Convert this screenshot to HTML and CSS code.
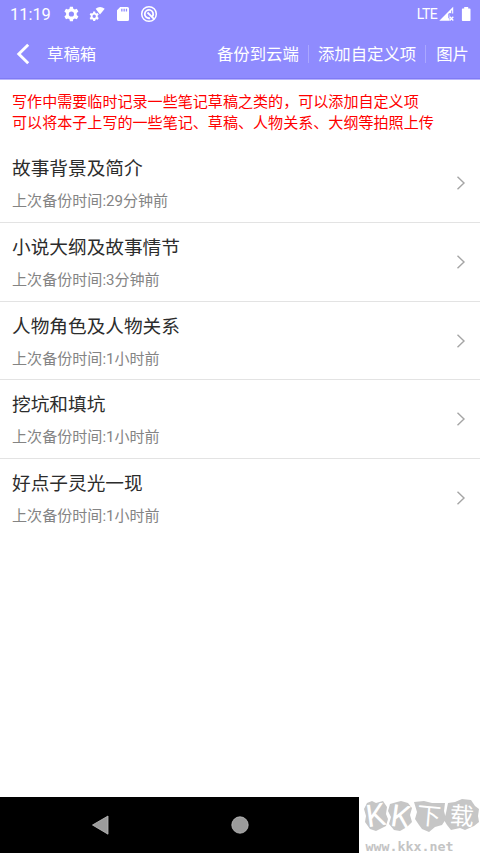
FILE: index.html
```html
<!DOCTYPE html>
<html lang="zh-CN">
<head>
<meta charset="utf-8">
<title>草稿箱</title>
<link rel="stylesheet" href="styles.css">
</head>
<body>
<div class="screen">
  <header class="top">
    <div class="status">
      <span class="clock">11:19</span>
      <svg class="status-icons" width="96" height="20" viewBox="0 0 96 20" fill="#fff">
        <g transform="translate(9.4 10)">
          <g id="gear">
            <path fill-rule="evenodd" d="M-1.5-7.3h3l.4 2.1 1.5.8 2-.8 1.6 2.7L5.3-1.1v2.2L7 2.5 5.4 5.2l-2-.8-1.5.8-.4 2.1h-3l-.4-2.1-1.5-.8-2 .8L-7 2.5l1.7-1.4v-2.200L-7-2.500l1.600-2.700 2 .8 1.500-.8zM0-2.600a2.600 2.600 0 1 0 0 5.200 2.600 2.600 0 0 0 0-5.200z"/>
          </g>
        </g>
        <use href="#gear" transform="translate(32.2 12.300) scale(.65)"/>
        <path d="M33.600 4.800Q38 1 42.700 4.800L38 10.600z"/>
        <path fill-rule="evenodd" d="M58.200 3h7.300q1.500 0 1.500 1.500v11q0 1.500-1.500 1.500h-9q-1.500 0-1.500-1.500V6.300zM59.200 4.800v2.600h1.300V4.800zm2.300 0v2.600h1.300V4.800zm2.300 0v2.600h1.300V4.800z"/>
        <g fill="none" stroke="#fff">
          <circle cx="87" cy="10" r="7.300" stroke-width="1.500"/>
          <path stroke-width="1.800" d="M90.500 12.300a4.200 4.200 0 1 0-2.500 1.800M85.500 8.500l6.700 6.700"/>
        </g>
      </svg>
      <span class="network">LTE</span>
      <svg class="signal" width="34" height="20" viewBox="0 0 34 20">
        <path d="M14.200 2.800V9.500h-3.700v7.200H.3z" fill="#fff"/>
        <path d="M12.700 6.500v3.300H9.800v4.400" stroke="#8f8bfe" stroke-width="1" fill="none"/>
        <path d="M10.700 12.700l3.600 3.800m0-3.800l-3.600 3.800" stroke="#fff" stroke-width="1.300"/>
        <path d="M25.200 3h4v1.500h1.500q.8 0 .8.800v11q0 .8-.8.800h-7q-.8 0-.8-.8v-11q0-.8.800-.8h1.500z" fill="#fff"/>
      </svg>
    </div>
    <div class="toolbar">
      <svg class="back" width="16" height="22" viewBox="0 0 16 22"><path d="M13.200 1.800L3.800 11l9.400 9.200" fill="none" stroke="#fff" stroke-width="2.900"/></svg>
      <h1 class="heading">草稿箱</h1>
      <nav class="actions">
        <span class="action"><span class="action-label">备份到云端</span></span>
        <span class="action"><span class="action-label">添加自定义项</span></span>
        <span class="action"><span class="action-label">图片</span></span>
      </nav>
    </div>
  </header>
  <main class="content">
    <p class="notice">写作中需要临时记录一些笔记草稿之类的，可以添加自定义项<br>可以将本子上写的一些笔记、草稿、人物关系、大纲等拍照上传</p>
    <ul class="list">
      <li class="row"><div><h2 class="title">故事背景及简介</h2><p class="time">上次备份时间:29分钟前</p></div><svg class="chevron" width="10" height="16" viewBox="0 0 10 16"><path d="M1.500 1.800L8 8l-6.500 6.200"/></svg></li>
      <li class="row"><div><h2 class="title">小说大纲及故事情节</h2><p class="time">上次备份时间:3分钟前</p></div><svg class="chevron" width="10" height="16" viewBox="0 0 10 16"><path d="M1.500 1.800L8 8l-6.500 6.200"/></svg></li>
      <li class="row"><div><h2 class="title">人物角色及人物关系</h2><p class="time">上次备份时间:1小时前</p></div><svg class="chevron" width="10" height="16" viewBox="0 0 10 16"><path d="M1.500 1.800L8 8l-6.500 6.200"/></svg></li>
      <li class="row"><div><h2 class="title">挖坑和填坑</h2><p class="time">上次备份时间:1小时前</p></div><svg class="chevron" width="10" height="16" viewBox="0 0 10 16"><path d="M1.500 1.800L8 8l-6.500 6.200"/></svg></li>
      <li class="row"><div><h2 class="title">好点子灵光一现</h2><p class="time">上次备份时间:1小时前</p></div><svg class="chevron" width="10" height="16" viewBox="0 0 10 16"><path d="M1.500 1.800L8 8l-6.500 6.200"/></svg></li>
    </ul>
  </main>
  <footer class="bottom">
    <div class="navbar">
      <svg width="359" height="56" viewBox="0 0 359 56" fill="#9b9b9b" stroke="#bdbdbd" stroke-width=".8">
        <path d="M92.500 28L108 19v18.200z"/>
        <circle cx="240" cy="28" r="8.200"/>
      </svg>
    </div>
    <svg class="brand" width="121" height="56" viewBox="0 0 121 56">
      <g fill="#c6c6c6">
        <path d="M8 6l5-2 4 2 7-2 4 6-1 7 2 5-2 7-6 3-4 2-6-2-5-7 1-6-2-7z"/>
        <path d="M31 7l7-2 4-1 7 2 4 5-2 7 2 7-5 5-7 4-6-1-5-6 2-7-3-6z"/>
        <path d="M55 5l10-1 8 2 13 0-1 8 2 8-4 6-7 2-6 5-7-3-3-4-4-6 2-7z"/>
        <path d="M89 6l7-1 7-3 9 1 4 6 4 3-1 7 1 6-5 4-9 4-5-2-9 2-4-5-3-5 2-7z"/>
      </g>
      <g class="brand-name" fill="#fff">
        <text class="brand-latin" x="7" y="29" transform="rotate(-8 16 18)">K</text>
        <text class="brand-latin" x="32" y="30" transform="rotate(8 40 18)">K</text>
        <text x="58" y="27.500" transform="rotate(5 70 18)">下</text>
        <text x="91" y="27.500" transform="rotate(4 103 18)">载</text>
      </g>
      <text class="brand-url" x="6.500" y="53.500" textLength="88" lengthAdjust="spacingAndGlyphs">www.kkx.net</text>
    </svg>
  </footer>
</div>
</body>
</html>
```
FILE: styles.css
```css
* {
  box-sizing: border-box;
}
body, h1, h2, p, ul {
  margin: 0;
  padding: 0;
}
body {
  background: #fff;
  font-family: Roboto, "Noto Sans CJK SC", sans-serif;
}
svg {
  display: block;
  flex: none;
}
.screen {
  display: flex;
  flex-direction: column;
  width: 480px;
  height: 853px;
  overflow: hidden;
}
.top {
  height: 80px;
  flex: none;
  color: #fff;
  background: #8f8bfe;
  border-bottom: 1px solid #b9b5fb;
  box-shadow: inset 0 -1px #807bf5;
}
.status {
  display: flex;
  align-items: center;
  height: 28px;
  padding: 0 7px 0 10px;
}
.clock {
  width: 52px;
  padding-top: 1px;
  font-size: 16.4px;
  line-height: 20px;
}
.network {
  margin-left: auto;
  margin-right: 2px;
  font-size: 14px;
  letter-spacing: -0.6px;
}
.toolbar {
  display: flex;
  align-items: center;
  height: 51px;
  padding: 0 11px 0 15px;
}
.heading {
  margin-left: 16px;
  padding-top: 2px;
  font-size: 16.4px;
  font-weight: 400;
  line-height: 24px;
}
.actions {
  display: flex;
  margin-left: auto;
}
.action {
  display: flex;
  align-items: center;
  height: 18px;
  font-size: 16.4px;
  white-space: nowrap;
}
.action-label {
  padding-bottom: 2px;
}
.action + .action {
  margin-left: 9px;
  padding-left: 9px;
  border-left: 1px solid #aaa7ff;
}
.action:last-child {
  padding-left: 10px;
}
.content {
  flex: 1;
}
.notice {
  padding: 12px 12px 0;
  height: 64.3px;
  color: #f00;
  font-size: 15.07px;
  line-height: 21px;
  white-space: nowrap;
}
.list {
  list-style: none;
}
.row {
  display: flex;
  align-items: flex-start;
  justify-content: space-between;
  height: 78.7px;
  padding: 9px 14px 0 12px;
  border-bottom: 1px solid #e3e3e3;
}
.row:last-child {
  border-color: transparent;
}
.title {
  color: #2c2c2c;
  font-size: 18.67px;
  font-weight: 400;
  line-height: 32px;
}
.time {
  color: #848484;
  font-size: 15.07px;
  line-height: 32px;
}
.chevron {
  margin-top: 22px;
  fill: none;
  stroke: #a5a5a5;
  stroke-width: 1.4;
}
.bottom {
  display: flex;
  height: 56px;
  flex: none;
}
.navbar {
  width: 359px;
  background: #000;
}
.brand {
  overflow: visible;
}
.brand-name {
  font: 400 24px "Noto Sans CJK SC", sans-serif;
}
.brand-latin {
  font: 400 31px Roboto, sans-serif;
}
.brand-url {
  fill: #c4c4c4;
  font: bold 12.5px "DejaVu Sans Mono", monospace;
}
```
